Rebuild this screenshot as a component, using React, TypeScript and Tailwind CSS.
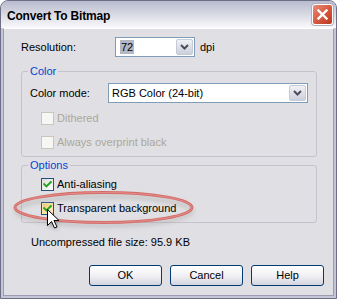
import React from "react";

function CheckMark() {
  return (
    <svg width="9" height="9" viewBox="0 0 9 9">
      <polyline points="1.2,4.2 3.4,6.4 7.8,2" fill="none" stroke="#21a121" strokeWidth="1.9" strokeLinecap="square" />
    </svg>
  );
}

function Chevron() {
  return (
    <svg width="9" height="6" viewBox="0 0 9 6">
      <polyline points="1,1 4.5,4.5 8,1" fill="none" stroke="#4d4d5c" strokeWidth="2" />
    </svg>
  );
}

function DropButton() {
  return (
    <div className="w-[17px] h-full flex items-center justify-center rounded-[2px] border border-[#c6cbd8] bg-gradient-to-b from-[#f1f2f6] to-[#ccd0dc]">
      <Chevron />
    </div>
  );
}

function Box({ kind, checked }: { kind: "disabled" | "normal" | "hover"; checked?: boolean }) {
  if (kind === "disabled") {
    return <span className="w-[13px] h-[13px] shrink-0 border border-[#c9c7ba] bg-[#f6f6f4]" />;
  }
  if (kind === "hover") {
    return (
      <span className="w-[13px] h-[13px] shrink-0 border border-[#1c5180] bg-[#fbe3a8] p-[1px] flex">
        <span className="flex-1 flex items-center justify-center bg-gradient-to-br from-[#f7c76a] to-[#fff2d0]">
          {checked && <CheckMark />}
        </span>
      </span>
    );
  }
  return (
    <span className="w-[13px] h-[13px] shrink-0 border border-[#1c5180] bg-gradient-to-br from-[#dcdcd7] to-white flex items-center justify-center">
      {checked && <CheckMark />}
    </span>
  );
}

function Btn({ label }: { label: string }) {
  return (
    <button className="w-[73px] h-[21px] rounded-[3px] border border-[#003c74] bg-gradient-to-b from-white via-[#f1f1f5] to-[#d4d4de] text-[11px] leading-[13px] text-black flex items-center justify-center">
      {label}
    </button>
  );
}

export default function App() {
  return (
    <div className="relative w-[337px] h-[299px] bg-white text-[11px] leading-[13px] text-black font-['Liberation_Sans',Arial,sans-serif]">
      <div className="w-full h-full flex flex-col rounded-t-[8px] border border-[#6e6f87] overflow-hidden bg-[#c5c6d5]">
        {/* title bar */}
        <div className="h-[27px] shrink-0 flex items-center pl-[6px] pr-[3px] bg-gradient-to-b from-[#b9bbcf] via-[#d9dae4] to-[#fafafc]">
          <span className="font-bold text-[12px] leading-[14px] tracking-[-0.2px] mt-[2px]">Convert To Bitmap</span>
          <div className="ml-auto w-[21px] h-[21px] rounded-[3px] border border-white bg-gradient-to-br from-[#e98d78] via-[#d65a40] to-[#b8381f] flex items-center justify-center shadow-[0_0_0_1px_#b0b0c0]">
            <svg width="11" height="11" viewBox="0 0 11 11">
              <path d="M1.5 1.5 L9.5 9.5 M9.5 1.5 L1.5 9.5" stroke="white" strokeWidth="2.4" strokeLinecap="square" />
            </svg>
          </div>
        </div>

        {/* body */}
        <div className="flex-1 mx-[2px] mb-[2px] border border-[#9c9db2] border-t-white bg-[#e0dfe3] flex flex-col">
          {/* Resolution row */}
          <div className="mt-[8px] pl-[17px] h-[20px] flex items-center">
            <span className="w-[94px]">Resolution:</span>
            <div className="w-[80px] h-[20px] border border-[#7f9db9] bg-white flex items-stretch p-[1px]">
              <div className="flex-1 flex items-center pl-[3px]">
                <span className="bg-[#b4b6c3] px-[1px] leading-[14px]">72</span>
              </div>
              <DropButton />
            </div>
            <span className="ml-[5px]">dpi</span>
          </div>

          {/* Color group */}
          <fieldset className="mt-[8px] ml-[17px] mr-[16px] border border-[#c4c3cb] rounded-[3px] pb-[7px] px-0">
            <legend className="ml-[6px] px-[2px] text-[#0046d5] leading-[13px]">Color</legend>
            <div className="mt-[5px] pl-[8px] pr-[8px] h-[20px] flex items-center">
              <span className="w-[78px]">Color mode:</span>
              <div className="flex-1 h-[20px] border border-[#7f9db9] bg-white flex items-stretch p-[1px]">
                <div className="flex-1 flex items-center pl-[2px]">RGB Color (24-bit)</div>
                <DropButton />
              </div>
            </div>
            <div className="mt-[9px] pl-[19px] flex items-center gap-[3px] text-[#aca899]">
              <Box kind="disabled" />
              <span>Dithered</span>
            </div>
            <div className="mt-[11px] pl-[19px] flex items-center gap-[3px] text-[#aca899]">
              <Box kind="disabled" />
              <span>Always overprint black</span>
            </div>
          </fieldset>

          {/* Options group */}
          <fieldset className="mt-[2px] ml-[17px] mr-[16px] border border-[#c4c3cb] rounded-[3px] pb-[7px] px-0">
            <legend className="ml-[6px] px-[2px] text-[#0046d5] leading-[13px]">Options</legend>
            <div className="mt-[6px] pl-[19px] flex items-center gap-[3px]">
              <Box kind="normal" checked />
              <span>Anti-aliasing</span>
            </div>
            <div className="mt-[11px] pl-[19px] flex items-center gap-[3px]">
              <Box kind="hover" checked />
              <span>Transparent background</span>
            </div>
          </fieldset>

          <div className="mt-[13px] pl-[27px]">Uncompressed file size: 95.9 KB</div>

          <div className="mt-auto mb-[9px] mr-[9px] flex justify-end gap-[8px]">
            <Btn label="OK" />
            <Btn label="Cancel" />
            <Btn label="Help" />
          </div>
        </div>
      </div>

      {/* annotation overlay: ellipse + cursor */}
      <svg className="absolute left-0 top-0 pointer-events-none" width="337" height="299" viewBox="0 0 337 299">
        <defs>
          <filter id="blur" x="-20%" y="-50%" width="140%" height="200%">
            <feGaussianBlur stdDeviation="2" />
          </filter>
        </defs>
        <ellipse cx="104" cy="211" rx="88" ry="14.5" fill="none" stroke="#9a9a9a" strokeOpacity="0.5" strokeWidth="3" filter="url(#blur)" />
        <ellipse cx="103.5" cy="207.5" rx="88.5" ry="15" fill="none" stroke="#d46d6a" strokeWidth="3" />
        <ellipse cx="103.5" cy="207.5" rx="88.5" ry="15" fill="none" stroke="#e79a96" strokeWidth="1" strokeOpacity="0.7" />
        <g transform="translate(47.5,209.5)">
          <path d="M1 3 L1 19 L5 15 L8 21 L10 20 L7 14 L12 14 Z" fill="#000" fillOpacity="0.25" filter="url(#blur)" />
          <path d="M0 0 L0 16 L4 12 L7 18.5 L9.5 17.5 L6.5 11 L11.5 11 Z" fill="#fff" stroke="#000" strokeWidth="1" strokeLinejoin="miter" />
        </g>
      </svg>
    </div>
  );
}
